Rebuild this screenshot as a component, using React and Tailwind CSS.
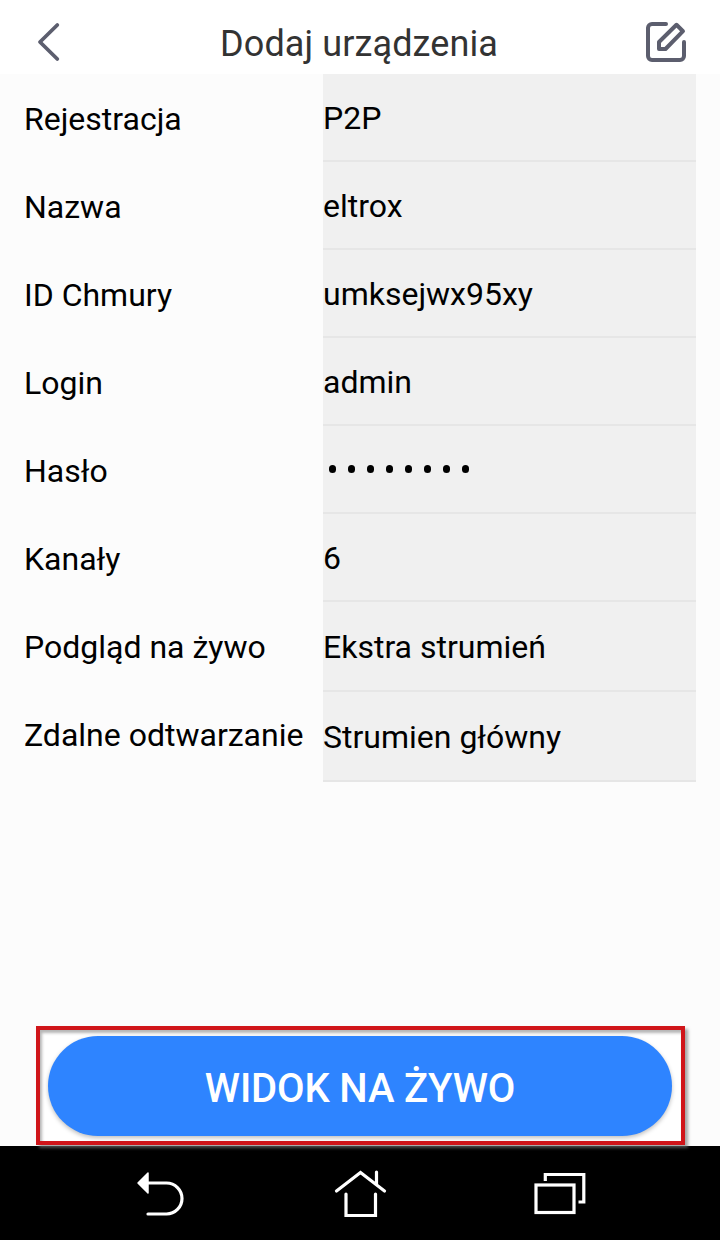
import React from 'react'

const labels = [
    'Rejestracja',
    'Nazwa',
    'ID Chmury',
    'Login',
    'Hasło',
    'Kanały',
    'Podgląd na żywo',
    'Zdalne odtwarzanie',
]

const fields = [
    { value: 'P2P' },
    { value: 'eltrox' },
    { value: 'umksejwx95xy' },
    { value: 'admin' },
    { value: '********', secret: true },
    { value: '6' },
    { value: 'Ekstra strumień', tall: true },
    { value: 'Strumien główny', tall: true },
]

function Header() {
    return (
        <header className="flex h-[74px] items-center justify-between bg-white pt-[10px] pr-[32px] pl-[36px] text-[#5c5e6e]">
            <svg width="24" height="40" viewBox="0 0 24 40" fill="none" stroke="currentColor" strokeWidth="3.8" strokeLinecap="round" strokeLinejoin="round">
                <path d="M21.3 3 4 20l17.3 17" />
            </svg>
            <h1 className="ml-[14px] pt-[4px] text-[36px] leading-[42px] tracking-[0.1px] text-[#333]">Dodaj urządzenia</h1>
            <svg width="44" height="44" viewBox="0 0 44 44" fill="none" stroke="currentColor" strokeWidth="4" strokeLinecap="round" strokeLinejoin="round">
                <path d="M22 4H8a4 4 0 0 0-4 4v28a4 4 0 0 0 4 4h28a4 4 0 0 0 4-4V22" />
                <path d="M15 29v-7L32.500 4.800 39 11.200 21.500 29z" />
            </svg>
        </header>
    )
}

function Field({ value, secret, tall }) {
    return (
        <div className={`flex items-center border-b-2 border-[#e6e6e6] bg-[#f0f0f0] ${tall ? 'h-[90px]' : 'h-[88px]'}`}>
            {secret ? (
                <div className="flex gap-[12px] pl-[6px]">
                    {value.split('').map((_, i) => (
                        <span key={i} className="h-[8px] w-[7px] rounded-full bg-black" />
                    ))}
                </div>
            ) : (
                <span className="pt-[2px]">{value}</span>
            )}
        </div>
    )
}

function NavBar() {
    return (
        <nav className="flex h-[94px] items-center bg-black pl-[130px] text-white">
            {/* Back */}
            <svg width="60" height="60" viewBox="0 0 60 60" fill="none" stroke="currentColor" strokeWidth="3.2" strokeLinecap="round">
                <path d="M17 20h19.500a15.500 15.500 0 0 1 0 31H18" />
                <path d="M8 20 18 10v20z" fill="currentColor" strokeWidth="1.5" strokeLinejoin="round" />
            </svg>
            {/* Home */}
            <svg className="ml-[140px]" width="60" height="60" viewBox="0 0 60 60" fill="none" stroke="currentColor" strokeWidth="3.2" strokeLinecap="round">
                <path d="M6.5 28 30.5 9.5 54.5 28M46.5 9v12M16 31v21.500h29.500V31" />
            </svg>
            {/* Recent apps */}
            <svg className="ml-[140px]" width="60" height="60" viewBox="0 0 60 60" fill="none" stroke="currentColor" strokeWidth="3.2">
                <rect x="6" y="22" width="38" height="27.500" />
                <path d="M15.300 18v-6.500h38.500v27.500H48.500" />
            </svg>
        </nav>
    )
}

export default function App() {
    return (
        <div className="flex h-[1240px] w-[720px] flex-col overflow-hidden bg-[#fcfcfc] font-['Roboto',sans-serif] text-[32px] leading-[38px] text-black">
            <Header />
            <main className="flex flex-1 flex-col px-[24px]">
                <div className="flex">
                    <div className="w-[299px] shrink-0">
                        {labels.map((label) => (
                            <div key={label} className="flex h-[88px] items-center pt-[2px] whitespace-nowrap">
                                {label}
                            </div>
                        ))}
                    </div>
                    <div className="flex-1">
                        {fields.map((field, i) => (
                            <Field key={i} {...field} />
                        ))}
                    </div>
                </div>
                <div className="relative z-10 mt-auto mb-[1px] ml-[12px] h-[119px] w-[649px] border-4 border-[#d0151a] bg-white px-[8px] pt-[6px] shadow-[3px_3px_3px_rgba(120,120,120,0.65),inset_2px_3px_3px_rgba(90,90,90,0.45)]">
                    <button className="h-[100px] w-[624px] rounded-full bg-[#2e84ff] pt-[6px] text-[40px] font-medium tracking-[-0.15px] text-white shadow-[0_2px_4px_rgba(0,0,0,0.25)]">
                        WIDOK NA ŻYWO
                    </button>
                </div>
            </main>
            <NavBar />
        </div>
    )
}
